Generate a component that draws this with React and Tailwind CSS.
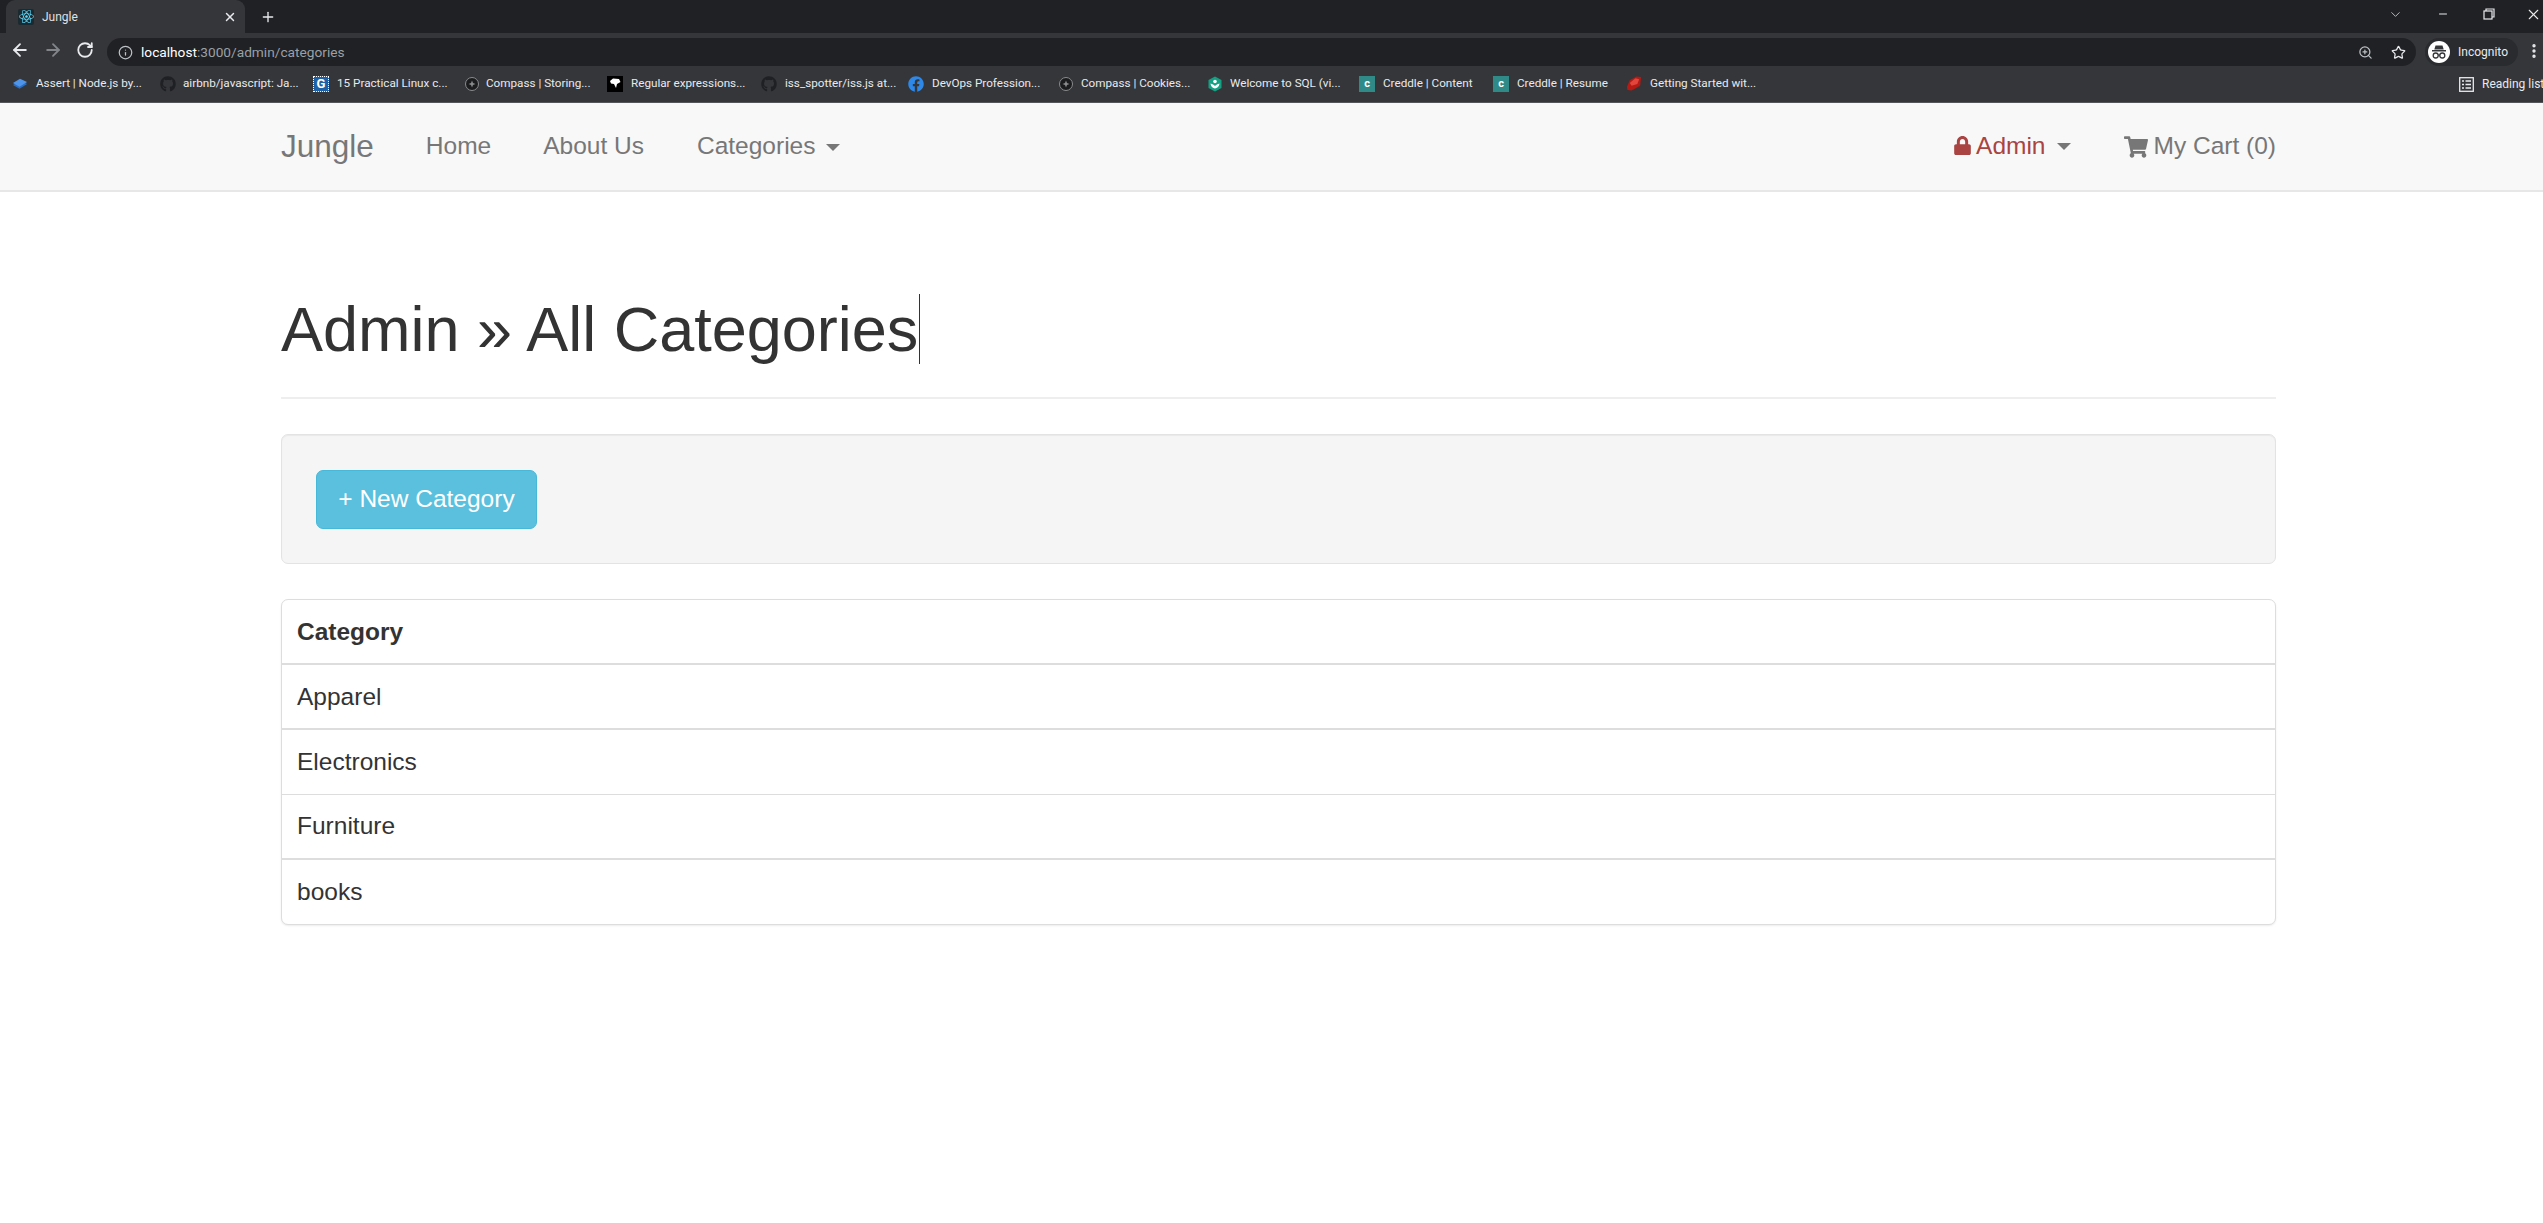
import React from 'react';
import { FaGithub, FaFacebook, FaLock, FaReact, FaShoppingCart } from 'react-icons/fa';
import { ArrowLeft, ArrowRight, RotateCw, Info, ZoomIn, Star, X, Plus, ChevronDown, Minus, EllipsisVertical } from 'lucide-react';

const CompassIcon = () => (
    <svg width="16" height="16" viewBox="0 0 16 16" fill="none">
        <circle cx="8" cy="8" r="6.5" fill="#1b1c1e" stroke="#8a8b8d" strokeWidth="1" />
        <path d="M8 4.5 9 7 11.5 8 9 9 8 11.5 7 9 4.5 8 7 7Z" fill="#8a8b8d" />
    </svg>
);

const AssertIcon = () => (
    <svg width="17" height="16" viewBox="0 0 17 16">
        <path d="M1 9 9 4.5 16 8 8 13Z" fill="#2b6fc4" />
        <path d="M1 7 8.500 2.500 16 6 8 11Z" fill="#4d94ea" />
    </svg>
);

const PracticalIcon = () => (
    <span className="w-4 h-4 bg-[#1d62a8] border border-dotted border-white text-white text-[13px] leading-[14px] font-bold text-center">G</span>
);

const RegexIcon = () => (
    <span className="w-4 h-4 bg-black flex items-center justify-center">
        <svg width="12" height="11" viewBox="0 0 12 11"><path d="M1 3 4 .5 10 1 11.500 4 8 6 7 10 5 6 2 5.500Z" fill="#fff" /></svg>
    </span>
);

const SqlIcon = () => (
    <svg width="16" height="16" viewBox="0 0 16 16">
        <path d="M8 .5 14.500 4V12L8 15.500 1.500 12V4Z" fill="#14a083" />
        <circle cx="8" cy="5.500" r="1.800" fill="#fff" />
        <path d="M3.500 7.500C4 11 6 12 8 12.500 10 12 12 11 12.500 7.500 10.500 8 9 9 8 10 7 9 5.500 8 3.500 7.500Z" fill="#fff" />
    </svg>
);

const CreddleIcon = () => (
    <span className="w-4 h-4 bg-[#2f8a88] text-white text-[11px] leading-[15px] font-bold text-center">c</span>
);

const RubyIcon = () => (
    <svg width="17" height="17" viewBox="0 0 17 17">
        <path d="M1 12 4 5 11 1 16 1.500 15 11 6 16 1.500 15.500Z" fill="#b51a14" />
        <path d="M4 8 10 3 14 4 12 9 6 11Z" fill="#e2453c" />
    </svg>
);

const IncognitoIcon = () => (
    <svg width="22" height="22" viewBox="0 0 22 22">
        <circle cx="11" cy="11" r="11" fill="#fff" />
        <path d="M7.500 4.500h7l1.200 4H6.300Z" fill="#35363a" />
        <rect x="4" y="9" width="14" height="1.500" fill="#35363a" />
        <circle cx="7.700" cy="14.500" r="2.500" fill="none" stroke="#35363a" strokeWidth="1.300" />
        <circle cx="14.300" cy="14.500" r="2.500" fill="none" stroke="#35363a" strokeWidth="1.300" />
        <path d="M10 14h2" stroke="#35363a" strokeWidth="1.200" />
    </svg>
);

const ReadingListIcon = () => (
    <svg width="15" height="15" viewBox="0 0 15 15" fill="none" stroke="#e8eaed" strokeWidth="1.300">
        <rect x=".7" y=".7" width="13.600" height="13.600" />
        <path d="M3 4h2M3 7.500h2M3 11h2M6.500 4H12M6.500 7.500H12M6.500 11H12" />
    </svg>
);

const GithubFav = () => <FaGithub size={16} color="#1f2023" />;

const bookmarks = [
    { w: 148, gap: 8, icon: <AssertIcon />, label: 'Assert | Node.js by...' },
    { w: 153, gap: 7, icon: <GithubFav />, label: 'airbnb/javascript: Ja...' },
    { w: 151, gap: 8, icon: <PracticalIcon />, label: '15 Practical Linux c...' },
    { w: 143, gap: 6, icon: <CompassIcon />, label: 'Compass | Storing...' },
    { w: 154, gap: 8, icon: <RegexIcon />, label: 'Regular expressions...' },
    { w: 147, gap: 8, icon: <GithubFav />, label: 'iss_spotter/iss.js at...' },
    { w: 150, gap: 8, icon: <FaFacebook size={16} color="#2d88e8" />, label: 'DevOps Profession...' },
    { w: 149, gap: 7, icon: <CompassIcon />, label: 'Compass | Cookies...' },
    { w: 152, gap: 7, icon: <SqlIcon />, label: 'Welcome to SQL (vi...' },
    { w: 134, gap: 8, icon: <CreddleIcon />, label: 'Creddle | Content' },
    { w: 133, gap: 8, icon: <CreddleIcon />, label: 'Creddle | Resume' },
    { w: 150, gap: 8, icon: <RubyIcon />, label: 'Getting Started wit...' },
];

const BrowserChrome = () => (
    <div className="font-['Roboto',sans-serif] text-[#e8eaed]">
        <div className="h-[33px] bg-[#202124] flex items-end pl-[6px]">
            <div className="w-[239px] h-[33px] bg-[#35363a] rounded-t-[9px] flex items-center pl-[12px] pr-[8px]">
                <span className="w-[16px] h-[16px] bg-[#1b2a30] flex items-center justify-center rounded-[2px]">
                    <FaReact size={15} color="#61dafb" />
                </span>
                <span className="ml-[8px] text-[12px] flex-1 text-[#dfe1e5]">Jungle</span>
                <X size={14} color="#e8eaed" strokeWidth={2.5} />
            </div>
            <div className="self-center ml-[15px]">
                <Plus size={16} color="#e8eaed" strokeWidth={2} />
            </div>
            <div className="flex-1" />
            <div className="flex items-center self-start h-[28px] pr-[1px]">
                <ChevronDown size={15} color="#bdc1c6" strokeWidth={1.5} />
                <div className="ml-[34px]"><Minus size={12} color="#e8eaed" strokeWidth={2} /></div>
                <svg className="ml-[34px]" width="12" height="12" viewBox="0 0 12 12" fill="none" stroke="#e8eaed" strokeWidth="1.200">
                    <rect x="1" y="3" width="8" height="8" />
                    <path d="M3 3V1h8v8H9" />
                </svg>
                <div className="ml-[30px]"><X size={17} color="#e8eaed" strokeWidth={1.500} /></div>
            </div>
        </div>
        <div className="h-[33px] bg-[#35363a] flex items-center">
            <div className="ml-[10px] flex items-center gap-[13px]">
                <ArrowLeft size={20} color="#e8eaed" strokeWidth={2.2} />
                <ArrowRight size={20} color="#82858a" strokeWidth={2.2} />
                <RotateCw size={18} color="#e8eaed" strokeWidth={2.4} />
            </div>
            <div className="ml-[13px] mt-[5px] w-[2310px] h-[28px] bg-[#202124] rounded-full flex items-center pl-[11px] pr-[10px]">
                <Info size={15} color="#bdc1c6" />
                <span className="ml-[8px] text-[13.7px] flex-1 text-[#9aa0a6]">
                    <span className="text-white">localhost</span>:3000/admin/categories
                </span>
                <ZoomIn size={15} color="#bdc1c6" />
                <div className="ml-[18px]"><Star size={15} color="#e8eaed" /></div>
            </div>
            <div className="ml-[9px] mt-[5px] w-[93px] h-[28px] bg-[#2a2b2e] rounded-full flex items-center pl-[3px]">
                <IncognitoIcon />
                <span className="ml-[8px] text-[12px] text-[#e8eaed]">Incognito</span>
            </div>
            <div className="ml-[7px] mt-[3px]"><EllipsisVertical size={18} color="#e8eaed" strokeWidth={2.5} /></div>
        </div>
        <div className="h-[37px] bg-[#35363a] flex items-center border-b border-[#55565a]">
            <div className="flex items-center pl-[12px]">
                {bookmarks.map((b, i) => (
                    <div key={i} className="flex items-center" style={{ width: b.w }}>
                        <span className="w-[16px] h-[17px] flex items-center justify-center shrink-0">{b.icon}</span>
                        <span className="text-[11.7px] whitespace-nowrap text-[#e8eaed]" style={{ marginLeft: b.gap }}>{b.label}</span>
                    </div>
                ))}
            </div>
            <div className="flex-1" />
            <div className="flex items-center w-[96px] shrink-0 overflow-hidden">
                <div className="w-px h-[16px] bg-[#5f6368]" />
                <div className="ml-[12px] shrink-0"><ReadingListIcon /></div>
                <span className="ml-[8px] text-[12px] whitespace-nowrap">Reading list</span>
            </div>
        </div>
    </div>
);

const Caret = () => (
    <span className="inline-block w-0 h-0 ml-[11px] align-middle text-[#777] border-t-[7px] border-x-[7px] border-t-current border-x-transparent" />
);

const Navbar = () => (
    <nav className="h-[89px] bg-[#f8f8f8] border-b-2 border-[#e7e7e7] pl-[281px] text-[#777] text-[24.5px]">
        <div className="w-[1995px] h-full flex items-center">
            <span className="text-[31.5px]">Jungle</span>
            <a className="ml-[52px]">Home</a>
            <a className="ml-[52px]">About Us</a>
            <a className="ml-[53px]">Categories<Caret /></a>
            <div className="ml-auto flex items-center">
                <a className="text-[#a94442] flex items-center">
                    <FaLock size={19} className="mr-[4px] mt-[-2px]" />Admin<Caret />
                </a>
                <a className="ml-[53px] flex items-center">
                    <FaShoppingCart size={24} className="mr-[6px]" />My Cart (0)
                </a>
            </div>
        </div>
    </nav>
);

const categories = [
    { name: 'Apparel', cls: 'h-[65px] pt-[2px] border-b-2' },
    { name: 'Electronics', cls: 'h-[65px] border-b' },
    { name: 'Furniture', cls: 'h-[65px] border-b-2' },
    { name: 'books', cls: 'h-[64px]' },
];

export default function App() {
    return (
        <div className="w-[2543px] h-[1223px] bg-white overflow-hidden font-['Liberation_Sans',Arial,sans-serif]">
            <BrowserChrome />
            <Navbar />
            <main className="pl-[281px] text-[#333] text-[24.5px]">
                <div className="w-[1995px]">
                    <div className="mt-[102px] border-b-2 border-[#eee] pb-[34px] h-[105px]">
                        <h1 className="text-[63px] leading-[70px] font-normal whitespace-nowrap">
                            Admin » All Categories<span className="inline-block w-px h-[70px] bg-[#333] align-top ml-[1px]" />
                        </h1>
                    </div>
                    <div className="mt-[35px] h-[130px] bg-[#f5f5f5] border border-[#e3e3e3] rounded-[7px] pl-[34px] flex items-center shadow-[inset_0_1px_1px_rgba(0,0,0,0.05)]">
                        <button className="w-[221px] h-[59px] bg-[#5bc0de] border border-[#46b8da] rounded-[7px] text-white">+ New Category</button>
                    </div>
                    <div className="mt-[35px] bg-white border border-[#ddd] rounded-[7px] shadow-[0_1px_2px_rgba(0,0,0,0.08)]">
                        <div className="h-[65px] pt-[2px] flex items-center px-[15px] font-bold border-b-2 border-[#ddd]">Category</div>
                        {categories.map(c => (
                            <div key={c.name} className={`flex items-center px-[15px] border-[#ddd] ${c.cls}`}>{c.name}</div>
                        ))}
                    </div>
                </div>
            </main>
        </div>
    );
}
